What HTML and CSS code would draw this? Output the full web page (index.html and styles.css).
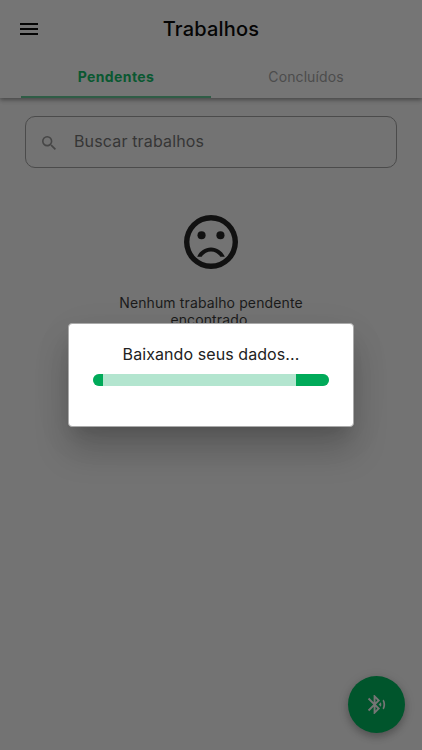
FILE: index.html
```html
<!DOCTYPE html>
<html lang="pt-BR">
<head>
<meta charset="utf-8">
<title>Trabalhos</title>
<link rel="stylesheet" href="styles.css">
</head>
<body>
<header class="appbar">
  <div class="toolbar">
    <svg class="menu" viewBox="0 0 18 12"><path d="M0 0h18v2H0zM0 5h18v2H0zM0 10h18v2H0z"/></svg>
    <h1 class="title"><span class="t-title">Trabalhos</span></h1>
  </div>
  <nav class="tabs">
    <div class="tab active"><span class="t-pend">Pendentes</span></div>
    <div class="tab"><span class="t-conc">Concluídos</span></div>
  </nav>
</header>
<main class="content">
  <div class="search">
    <svg class="search-icon" viewBox="3 3 17.5 17.5"><path d="M15.5 14h-.79l-.28-.27A6.47 6.47 0 0 0 16 9.5 6.5 6.5 0 1 0 9.5 16c1.61 0 3.09-.59 4.23-1.57l.27.28v.79l5 4.99L20.49 19l-4.99-5zm-6 0C7.01 14 5 11.99 5 9.5S7.01 5 9.5 5 14 7.01 14 9.5 11.99 14 9.5 14z"/></svg>
    <span class="t-search">Buscar trabalhos</span>
  </div>
  <svg class="sad" viewBox="2 2 20 20"><path d="M12 2a10 10 0 1 0 0 20 10 10 0 0 0 0-20zm0 18a8 8 0 1 1 0-16 8 8 0 0 1 0 16z"/><circle cx="8.5" cy="9.5" r="1.5"/><circle cx="15.5" cy="9.5" r="1.5"/><path d="M12 14c-2.33 0-4.32 1.45-5.12 3.5h1.67c.69-1.19 1.97-2 3.45-2s2.75.81 3.45 2h1.67c-.8-2.05-2.79-3.5-5.12-3.5z"/></svg>
  <p class="empty"><span class="t-empty">Nenhum trabalho pendente</span><br>encontrado.</p>
</main>
<button class="fab" aria-label="Bluetooth">
  <svg viewBox="0 0 24 24"><path d="M14.24 12.01l2.32 2.32c.28-.72.44-1.51.44-2.33 0-.82-.16-1.59-.43-2.31l-2.33 2.32zm5.29-5.3l-1.26 1.26c.63 1.21.98 2.57.98 4.02s-.36 2.82-.98 4.02l1.2 1.2c.97-1.54 1.54-3.36 1.54-5.31-.01-1.89-.55-3.67-1.48-5.19zm-3.82 1L10 2H9v7.59L4.41 5 3 6.41 8.59 12 3 17.59 4.41 19 9 14.41V22h1l5.71-5.71-4.3-4.29 4.3-4.29zM11 5.83l1.88 1.88L11 9.59V5.83zm1.88 10.46L11 18.17v-3.76l1.88 1.88z"/></svg>
</button>
<section class="dialog" role="dialog">
  <span class="t-dialog">Baixando seus dados...</span>
  <div class="progress"><i class="start"></i><i class="end"></i></div>
</section>
</body>
</html>
```
FILE: styles.css
```css
* { box-sizing: border-box; }
body {
  margin: 0;
  width: 422px;
  height: 750px;
  overflow: hidden;
  position: relative;
  background: #737373;
  color: #1b1b1b;
  font-family: Inter, "Liberation Sans", sans-serif;
}
.appbar {
  height: 98px;
  background: #757575;
  box-shadow: 0 2px 4px rgba(0,0,0,.3), 0 1px 6px rgba(0,0,0,.12);
}
.toolbar {
  height: 57px;
  display: grid;
  grid-template-columns: 58px 1fr 58px;
  align-items: center;
}
.menu { width: 18px; height: 12px; margin-left: 20px; fill: #050505; }
.title {
  margin: 0;
  text-align: center;
  font-size: 20px;
  font-weight: 450;
  line-height: 24px;
  color: #050505;
  letter-spacing: .2px;
}
.tabs { display: flex; padding: 0 21px; height: 41px; }
.tab {
  flex: 1;
  padding-top: 11px;
  text-align: center;
  font-size: 14px;
  line-height: 18px;
  letter-spacing: .1px;
  color: #4c4c4c;
}
.tab.active { color: #0a5831; font-weight: 700; letter-spacing: .4px; border-bottom: 2px solid #2f5d46; }
.content { display: flex; flex-direction: column; align-items: center; padding-top: 18px; }
.search {
  width: 372px;
  height: 52px;
  border: 1px solid #4b4b4b;
  border-radius: 10px;
  display: flex;
  align-items: center;
  padding: 0 0 2px 16px;
  gap: 18px;
  font-size: 16px;
  letter-spacing: .15px;
  color: #363636;
}
.search-icon { width: 14px; height: 14px; fill: #464646; margin-top: 3px; }
.sad { width: 54px; height: 54px; margin-top: 46.5px; fill: #111; }
.empty {
  margin: 25.5px 0 0;
  text-align: center;
  font-size: 14px;
  line-height: 17px;
  letter-spacing: .12px;
}
.fab {
  position: absolute;
  left: 348px;
  top: 676px;
  width: 57px;
  height: 57px;
  padding: 0;
  border: 0;
  border-radius: 50%;
  background: #00552c;
  display: flex;
  align-items: center;
  justify-content: center;
  box-shadow: 0 4px 7px rgba(0,0,0,.2), 0 2px 12px rgba(0,0,0,.12);
}
.fab svg { width: 23px; height: 23px; fill: #757575; }
.dialog {
  position: absolute;
  left: 68px;
  top: 323px;
  width: 286px;
  height: 104px;
  border-radius: 4px;
  background: #fff;
  border: 1px solid #aaa;
  display: flex;
  flex-direction: column;
  align-items: center;
  padding-top: 20px;
  font-size: 16px;
  line-height: 20px;
  letter-spacing: .08px;
  color: #212121;
  box-shadow: 0 11px 15px -7px rgba(0,0,0,.1), 0 24px 34px 0 rgba(0,0,0,.18), 0 9px 40px 0 rgba(0,0,0,.06);
}
.progress {
  width: 236px;
  height: 12px;
  margin-top: 9.5px;
  border-radius: 6px;
  overflow: hidden;
  background: #b3e5cf;
  display: flex;
  justify-content: space-between;
}
.start, .end { background: #00aa59; }
.start { width: 10px; }
.end { width: 33px; }
```
